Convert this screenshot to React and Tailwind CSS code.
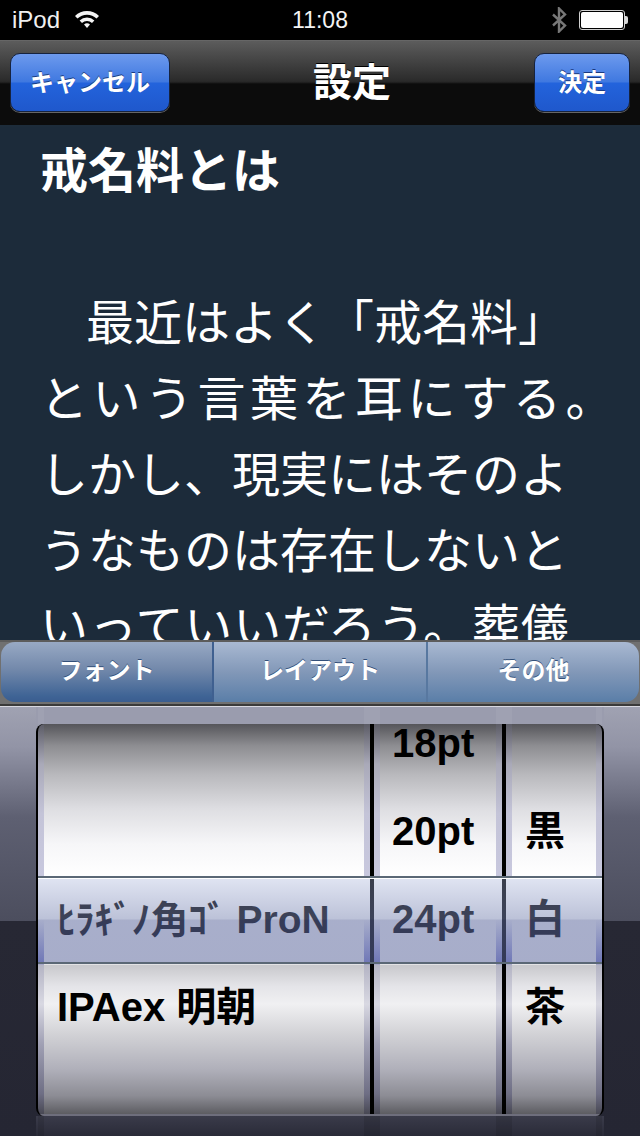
const JP = "font-['Liberation_Sans','Noto_Sans_CJK_JP',sans-serif]";

function Strip() {
  return (
    <div className="w-[6px] shrink-0 bg-[linear-gradient(to_bottom,#5c5c66_0px,#a9a9b8_40px,#c4c4d8_90px,#c8c8de_152px,#ffffff_155px,#ffffff_195px,#8387d5_239px,#b4b4c4_241px,#d8d8e2_280px,#a0a0b4_320px,#6e6e84_370px,#44444e_392px)]" />
  );
}

function Sep() {
  return <div className="w-[4px] shrink-0 bg-black" />;
}

function Wheel({ className, rows, align }) {
  return (
    <div className={"shrink-0 h-full overflow-hidden bg-[linear-gradient(to_bottom,#55555a_0px,#8e8e92_22px,#b8b8bc_50px,#dedee2_85px,#f6f6f8_120px,#ffffff_152px,#ffffff_240px,#c8c8cc_241px,#e4e4e8_262px,#f0f0f2_280px,#d2d2d6_310px,#b0b0ba_345px,#8c8c94_372px,#57575c_392px)] " + className}>
      <div className="flex flex-col -mt-[25px]">
        {rows.map((r, i) => (
          <div key={i} className={"h-[88px] flex items-center text-[40px] font-bold text-black whitespace-nowrap " + align}>
            {r}
          </div>
        ))}
      </div>
    </div>
  );
}

function Bands({ tint, className }) {
  const band = "w-[16px] shrink-0 " + tint;
  return (
    <div className={"flex justify-between mx-[2px] " + className}>
      <div className={"w-[6px] shrink-0 " + tint} />
      <div className="w-[320px] shrink-0" />
      <div className={band} />
      <div className="w-[116px] shrink-0" />
      <div className={band} />
      <div className="w-[84px] shrink-0" />
      <div className={"w-[6px] shrink-0 " + tint} />
    </div>
  );
}

const BTN =
  "h-[59px] shrink-0 pt-[1px] rounded-[10px] border border-[#16233f] shadow-[0_1px_0_#666] text-white text-[24px] font-bold bg-[linear-gradient(to_bottom,#6d9aee_0%,#3f78e0_49%,#2363dc_51%,#1f58cc_100%)] [text-shadow:0_-1px_0_#1a3a80]";

export default function App() {
  return (
    <div className={"w-[640px] h-[1136px] overflow-hidden flex flex-col bg-black " + JP}>
      {/* status bar */}
      <div className="h-[40px] shrink-0 bg-black flex items-center text-white px-[12px]">
        <div className="flex-1 flex items-center gap-[14px]">
          <span className="text-[24px] font-normal text-[#f0f0f0]">iPod</span>
          <svg width="26" height="20" viewBox="0 0 26 20" className="-mt-[2px]">
            <path d="M1 7 A17 17 0 0 1 25 7 L22.5 9.6 A13.5 13.5 0 0 0 3.5 9.6 Z" fill="#f4f4f4" />
            <path d="M5.6 11.6 A10.6 10.6 0 0 1 20.4 11.6 L18 14 A7.2 7.2 0 0 0 8 14 Z" fill="#f4f4f4" />
            <path d="M10 15.6 A4.4 4.4 0 0 1 16 15.6 L13 19 Z" fill="#f4f4f4" />
          </svg>
        </div>
        <span className="text-[23px] font-normal text-[#f4f4f4]">11:08</span>
        <div className="flex-1 flex items-center justify-end gap-[12px]">
          <svg width="16" height="26" viewBox="0 0 16 26">
            <path d="M2 7.5 L14 18.5 L8 24.5 L8 1.5 L14 7.5 L2 18.5" fill="none" stroke="#777" strokeWidth="2.4" />
          </svg>
          <div className="flex items-center">
            <div className="w-[46px] h-[20px] rounded-[3px] border border-[#d0d0d0] p-[1px]">
              <div className="w-full h-full bg-white rounded-[2px]" />
            </div>
            <div className="w-[3px] h-[8px] bg-[#d8d8d8] rounded-r-[2px]" />
          </div>
        </div>
      </div>

      {/* nav bar */}
      <div className="h-[87px] shrink-0 flex items-center px-[10px] pb-[2px] border-t border-[#666] border-b-2 border-b-[#1d2c3a] bg-[linear-gradient(to_bottom,#5c5c5c_0%,#2a2a2a_48%,#1b1b1b_50%,#0c0c0c_51%,#0c0c0c_100%)]">
        <button className={"w-[160px] " + BTN}>キャンセル</button>
        <div className="flex-1 pt-[3px] text-center text-white text-[39px] font-bold [text-shadow:0_-1px_0_#000]">設定</div>
        <button className={"w-[96px] " + BTN}>決定</button>
      </div>

      {/* reading area */}
      <div className="flex-1 min-h-0 overflow-hidden bg-[#1c2b3a] text-white pl-[40px] pt-[14px]">
        <h1 className="text-[48px] leading-[62px] font-bold">戒名料とは</h1>
        <div className="mt-[83px] text-[48px] leading-[76px] font-normal whitespace-nowrap">
          <p className="ml-[46px]">最近はよく「戒名料」</p>
          <p className="tracking-[4.5px]">という言葉を耳にする。</p>
          <p>しかし、現実にはそのよ</p>
          <p>うなものは存在しないと</p>
          <p className="tracking-[0.9px]">いっていいだろう。葬儀</p>
        </div>
      </div>

      {/* segmented control */}
      <div className="h-[66px] shrink-0 bg-[#707070] border-t-2 border-[#5c5c5c] border-b-2 border-b-[#3a3a3a] px-[1px] pb-[2px]">
        <div className="h-full flex rounded-[14px] overflow-hidden text-white text-[24px] font-bold [text-shadow:0_-1px_0_#33507a]">
          <div className="w-[211px] pb-[3px] flex items-center justify-center bg-[linear-gradient(to_bottom,#98a9c4_0%,#7389ab_45%,#3f6495_90%,#3a5d90_100%)]">フォント</div>
          <div className="w-[214px] pb-[3px] border-l-2 border-[#3f6090] flex items-center justify-center bg-[linear-gradient(to_bottom,#a9b9d2_0%,#8298b8_50%,#5a7ea8_100%)]">レイアウト</div>
          <div className="flex-1 pb-[3px] border-l-2 border-[#5878a0] flex items-center justify-center bg-[linear-gradient(to_bottom,#a9b9d2_0%,#8298b8_50%,#5a7ea8_100%)]">その他</div>
        </div>
      </div>

      {/* picker */}
      <div className="h-[430px] shrink-0 border-t border-[#d8d8e0] px-[36px] bg-[linear-gradient(to_bottom,#a0a2b2_0px,#9294a6_40px,#5e6072_110px,#4c4e5e_214px,#272834_214px,#252633_430px)]">
        <div className="h-[17px] bg-[#9a9cae]">
          <Bands tint="bg-white/5" className="h-full" />
        </div>
        <div className="relative h-[392px] flex overflow-hidden rounded-[8px] border-x-2 border-black bg-black">
          <Strip />
          <Wheel
            className="w-[320px]"
            align="pl-[13px]"
            rows={[
              "",
              "",
              <span>
                <span className="text-[38px] tracking-[-0.4px]">ﾋﾗｷﾞﾉ角ｺﾞ</span>
                <span className="text-[39px]"> ProN</span>
              </span>,
              "IPAex 明朝",
            ]}
          />
          <Strip />
          <Sep />
          <Strip />
          <Wheel className="w-[116px]" align="pl-[12px]" rows={["18pt", "20pt", "24pt", ""]} />
          <Strip />
          <Sep />
          <Strip />
          <Wheel className="w-[84px]" align="pl-[13px]" rows={["", "黒", "白", "茶"]} />
          <Strip />
          {/* selection glass */}
          <div className="absolute left-0 right-0 top-[152px] h-[88px] border-t-2 border-[#5b6876] border-b-2 border-b-[#5b6876] shadow-[inset_0_1px_0_#ffffff] bg-[linear-gradient(to_bottom,rgba(166,178,218,0.35)_0px,rgba(121,133,177,0.5)_41px,rgba(97,108,160,0.55)_42px,rgba(95,106,158,0.55)_100%)]" />
          {/* bottom lip */}
          <div className="absolute left-0 right-0 bottom-0 h-[2px] bg-[#6e6e7c]" />
        </div>
        <div className="h-[20px] bg-[linear-gradient(to_bottom,#3a3b4a_0%,#2a2b38_100%)]">
          <Bands tint="bg-black/10" className="h-full" />
        </div>
      </div>
    </div>
  );
}
